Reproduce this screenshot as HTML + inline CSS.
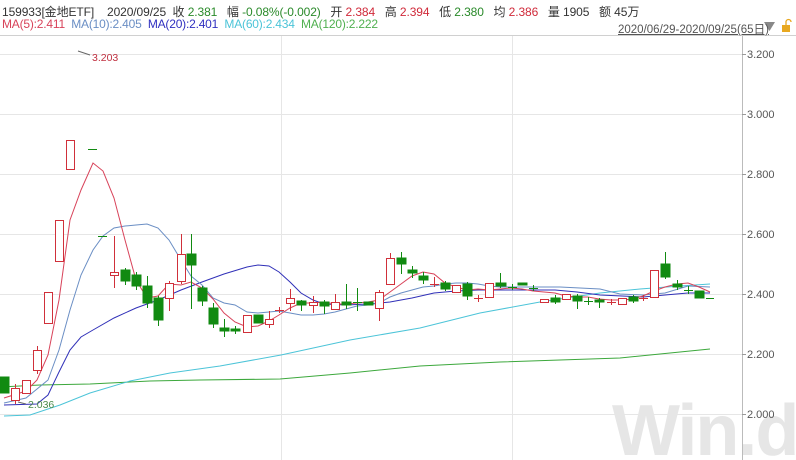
<!DOCTYPE html>
<html><head><meta charset="utf-8"><style>
html,body{margin:0;padding:0;background:#fff;width:796px;height:460px;overflow:hidden}
body{font-family:"Liberation Sans","Noto Sans CJK SC",sans-serif;position:relative}
.h1{position:absolute;left:2px;top:3px;font-size:12px;color:#333;white-space:nowrap;letter-spacing:-0.1px}
.h2{position:absolute;left:2px;top:17px;font-size:12px;white-space:nowrap;letter-spacing:-0.2px}
.g{color:#2a8a2a}.r{color:#d02a3a}
.dt{position:absolute;left:618px;top:21px;font-size:11.5px;color:#555;text-decoration:underline;white-space:nowrap}
svg{position:absolute;left:0;top:0}
</style></head><body>
<svg width="796" height="460" xmlns="http://www.w3.org/2000/svg">
<text x="612" y="455" font-family="Liberation Sans" font-weight="bold" font-size="72" fill="#e6e6e6" letter-spacing="-2">Win.d</text>
<line x1="0" y1="35.5" x2="796" y2="35.5" stroke="#d0d0d0"/>
<g stroke="#e6e6e6" stroke-width="1">
<line x1="0" y1="54.5" x2="742" y2="54.5"/><line x1="0" y1="114.5" x2="742" y2="114.5"/>
<line x1="0" y1="174.5" x2="742" y2="174.5"/><line x1="0" y1="234.5" x2="742" y2="234.5"/>
<line x1="0" y1="294.5" x2="742" y2="294.5"/><line x1="0" y1="354.5" x2="742" y2="354.5"/>
<line x1="0" y1="414.5" x2="742" y2="414.5"/>
<line x1="281.5" y1="36" x2="281.5" y2="460"/><line x1="512.5" y1="36" x2="512.5" y2="460"/>
</g>
<line x1="742.5" y1="36" x2="742.5" y2="460" stroke="#bbb"/>
<g stroke="#999"><line x1="742" y1="54.5" x2="746" y2="54.5"/><line x1="742" y1="114.5" x2="746" y2="114.5"/><line x1="742" y1="174.5" x2="746" y2="174.5"/><line x1="742" y1="234.5" x2="746" y2="234.5"/><line x1="742" y1="294.5" x2="746" y2="294.5"/><line x1="742" y1="354.5" x2="746" y2="354.5"/><line x1="742" y1="414.5" x2="746" y2="414.5"/></g>
<g font-size="11" fill="#555" font-family="Liberation Sans">
<text x="747" y="58">3.200</text><text x="747" y="118">3.000</text><text x="747" y="178">2.800</text><text x="747" y="238">2.600</text><text x="747" y="298">2.400</text><text x="747" y="358">2.200</text><text x="747" y="418">2.000</text>
</g>
<!-- MA lines -->
<g fill="none" stroke-width="1">
<polyline stroke="#3ca83c" points="0,387 40,385 90,384 150,381 200,380 280,379 350,373 420,366 500,362 560,360 620,358 680,352 710,349"/>
<polyline stroke="#4cc4d8" points="4,416 30,415 60,405 90,393 130,381 170,373 220,366 281,355 350,340 420,328 480,313 540,302 600,293 640,289 680,286 710,284"/>
<polyline stroke="#3030b8" points="4,405 37,404 48,395 59,372 70,350 81,337 93,330 114,318 136,308 158,300 181,290 202,282 224,274 247,267 258,265 269,266 279,272 290,282 301,293 313,300 324,304 346,305 368,304 390,302 412,298 434,293 456,291 478,290 511,290 555,290 577,292 600,295 622,296 643,297 665,295 688,293 710,293"/>
<polyline stroke="#6a8ec4" points="4,403 26,398 48,380 59,350 70,310 81,275 93,250 103,236 114,228 125,226 136,225 147,224 158,228 169,240 181,260 191,276 202,285 213,298 224,303 235,305 247,312 258,313 269,312 279,311 290,313 301,315 313,315 324,314 335,312 346,309 357,306 368,305 379,303 390,297 401,293 412,290 423,287 434,286 445,284 456,283 467,283 478,284 489,286 500,287 560,287 600,289 620,294 643,295 665,293 688,286 710,287"/>
<polyline stroke="#d8435a" points="4,398 26,391 37,380 48,355 59,300 70,220 81,190 93,163 103,171 114,198 125,240 136,280 147,298 158,296 169,284 181,285 191,282 202,288 213,299 224,313 235,322 247,327 258,326 269,321 279,315 290,308 301,303 313,303 324,302 335,304 346,304 357,303 368,302 379,300 390,292 401,284 412,276 423,272 434,274 445,283 456,287 467,290 478,289 489,290 500,289 511,288 522,289 533,291 544,292 555,293 566,296 577,297 588,297 599,299 611,300 622,300 633,299 643,296 654,291 665,287 677,284 688,283 699,287 710,292"/>
</g>
<!-- candles -->
<g id="c" stroke-width="1">
<!-- red hollow: stroke #d0303a fill white; green: fill #118a11 -->
<g stroke="#118a11" fill="#118a11">
<rect x="0" y="377" width="9" height="16"/>
<line x1="88" y1="149.5" x2="97" y2="149.5"/>
<line x1="98" y1="236.5" x2="107" y2="236.5"/>
<line x1="125.5" y1="268" x2="125.5" y2="285"/><rect x="121" y="270" width="9" height="11"/>
<line x1="136.5" y1="272" x2="136.5" y2="290"/><rect x="132" y="275" width="9" height="11"/>
<line x1="147.5" y1="276" x2="147.5" y2="308"/><rect x="143" y="286" width="9" height="17"/>
<line x1="158.5" y1="296" x2="158.5" y2="326"/><rect x="154" y="298" width="9" height="22"/>
<line x1="191.5" y1="234" x2="191.5" y2="309"/><rect x="187" y="254" width="9" height="11"/>
<line x1="202.5" y1="286" x2="202.5" y2="306"/><rect x="198" y="288" width="9" height="13"/>
<line x1="213.5" y1="303" x2="213.5" y2="328"/><rect x="209" y="308" width="9" height="16"/>
<line x1="224.5" y1="319" x2="224.5" y2="337"/><rect x="220" y="328" width="9" height="3"/>
<line x1="235.5" y1="326" x2="235.5" y2="334"/><rect x="231" y="329" width="9" height="2"/>
<rect x="254" y="315" width="9" height="8"/>
<line x1="301.5" y1="300" x2="301.5" y2="311"/><rect x="297" y="301" width="9" height="4"/>
<line x1="324.5" y1="300" x2="324.5" y2="314"/><rect x="320" y="302" width="9" height="4"/>
<line x1="346.5" y1="284" x2="346.5" y2="309"/><rect x="342" y="302" width="9" height="3"/>
<line x1="357.5" y1="288" x2="357.5" y2="311"/><line x1="353" y1="302.5" x2="362" y2="302.5"/>
<rect x="364" y="302" width="9" height="3"/>
<line x1="401.5" y1="252" x2="401.5" y2="274"/><rect x="397" y="258" width="9" height="6"/>
<line x1="412.5" y1="266" x2="412.5" y2="278"/><rect x="408" y="270" width="9" height="3"/>
<line x1="423.5" y1="272" x2="423.5" y2="284"/><rect x="419" y="276" width="9" height="4"/>
<line x1="445.5" y1="281" x2="445.5" y2="291"/><rect x="441" y="283" width="9" height="6"/>
<line x1="467.5" y1="282" x2="467.5" y2="300"/><rect x="463" y="284" width="9" height="12"/>
<line x1="500.5" y1="273" x2="500.5" y2="288"/><rect x="496" y="283" width="9" height="3"/>
<rect x="498" y="283" width="8" height="3"/>
<line x1="512.5" y1="284" x2="512.5" y2="290"/><line x1="508" y1="287.5" x2="517" y2="287.5"/>
<rect x="518" y="283" width="9" height="2"/>
<line x1="533.5" y1="285" x2="533.5" y2="291"/><line x1="529" y1="288.5" x2="538" y2="288.5"/>
<line x1="555.5" y1="295" x2="555.5" y2="304"/><rect x="551" y="298" width="9" height="4"/>
<line x1="577.5" y1="294" x2="577.5" y2="309"/><rect x="573" y="296" width="9" height="5"/>
<line x1="588.5" y1="297" x2="588.5" y2="305"/><line x1="584" y1="301.5" x2="593" y2="301.5"/>
<line x1="599.5" y1="298" x2="599.5" y2="308"/><rect x="595" y="300" width="9" height="2"/>
<line x1="633.5" y1="295" x2="633.5" y2="303"/><rect x="629" y="297" width="9" height="4"/>
<line x1="665.5" y1="252" x2="665.5" y2="279"/><rect x="661" y="264" width="9" height="13"/>
<line x1="677.5" y1="280" x2="677.5" y2="290"/><rect x="673" y="284" width="9" height="3"/>
<line x1="688.5" y1="286" x2="688.5" y2="294"/><line x1="684" y1="290.5" x2="693" y2="290.5"/>
<rect x="695" y="291" width="9" height="7"/>
<line x1="706" y1="298.5" x2="714" y2="298.5"/>
</g>
<g stroke="#d0303a" fill="#fff">
<line x1="15.5" y1="384" x2="15.5" y2="404"/><rect x="11.5" y="388.5" width="8" height="12"/>
<rect x="22.5" y="380.5" width="8" height="13"/>
<line x1="37.5" y1="346" x2="37.5" y2="374"/><rect x="33.5" y="350.5" width="8" height="20"/>
<rect x="44.5" y="292.5" width="8" height="31"/>
<rect x="55.5" y="220.5" width="8" height="41"/>
<rect x="66.5" y="140.5" width="8" height="29"/>
<line x1="114.5" y1="236" x2="114.5" y2="288"/><rect x="110.5" y="272.5" width="8" height="3"/>
<line x1="169.5" y1="281" x2="169.5" y2="311"/><rect x="165.5" y="283.5" width="8" height="15"/>
<line x1="181.5" y1="234" x2="181.5" y2="284"/><rect x="177.5" y="254.5" width="8" height="27"/>
<rect x="243.5" y="315.5" width="8" height="17"/>
<line x1="269.5" y1="311" x2="269.5" y2="328"/><rect x="265.5" y="319.5" width="8" height="5"/>
<line x1="279.5" y1="307" x2="279.5" y2="313"/><line x1="275" y1="310.5" x2="284" y2="310.5"/>
<line x1="290.5" y1="289" x2="290.5" y2="311"/><rect x="286.5" y="298.5" width="8" height="5"/>
<line x1="313.5" y1="296" x2="313.5" y2="313"/><rect x="309.5" y="302.5" width="8" height="3"/>
<line x1="335.5" y1="294" x2="335.5" y2="309"/><rect x="331.5" y="302.5" width="8" height="7"/>
<line x1="379.5" y1="290" x2="379.5" y2="321"/><rect x="375.5" y="292.5" width="8" height="16"/>
<line x1="390.5" y1="253" x2="390.5" y2="284"/><rect x="386.5" y="258.5" width="8" height="26"/>
<line x1="434.5" y1="277" x2="434.5" y2="287"/><line x1="430" y1="284.5" x2="439" y2="284.5"/>
<rect x="452.5" y="285.5" width="8" height="7"/>
<line x1="478.5" y1="295" x2="478.5" y2="302"/><line x1="474" y1="298.5" x2="483" y2="298.5"/>
<rect x="485.5" y="283.5" width="8" height="14"/>
<rect x="540.5" y="299.5" width="8" height="3"/>
<rect x="562.5" y="294.5" width="8" height="5"/>
<line x1="611.5" y1="299" x2="611.5" y2="305"/><line x1="607" y1="302.5" x2="616" y2="302.5"/>
<rect x="618.5" y="298.5" width="8" height="6"/>
<line x1="643.5" y1="295" x2="643.5" y2="301"/><line x1="639" y1="298.5" x2="648" y2="298.5"/>
<rect x="650.5" y="270.5" width="8" height="27"/>
</g>
</g>
<line x1="78" y1="51" x2="90" y2="55" stroke="#666"/>
<text x="92" y="61" font-size="10.5" fill="#c03040" font-family="Liberation Sans">3.203</text>
<line x1="18" y1="402" x2="26" y2="404" stroke="#666"/>
<text x="28" y="408" font-size="10.5" fill="#4a8a4a" font-family="Liberation Sans">2.036</text>
<polygon points="764,22 775,22 769.5,31" fill="#888"/>
<rect x="782" y="25" width="8" height="7" fill="#e8a820"/>
<path d="M786,25 v-3 a2.5,2.5 0 0 1 5,0" fill="none" stroke="#e8a820" stroke-width="1.3"/>
</svg>
<div class="h1">159933[金地ETF] &nbsp;&nbsp;&nbsp;2020/09/25 &nbsp;收 <span class="g">2.381</span> &nbsp;&nbsp;幅 <span class="g">-0.08%(-0.002)</span> &nbsp;&nbsp;开 <span class="r">2.384</span> &nbsp;&nbsp;高 <span class="r">2.394</span> &nbsp;&nbsp;低 <span class="g">2.380</span> &nbsp;&nbsp;均 <span class="r">2.386</span> &nbsp;&nbsp;量 1905 &nbsp;&nbsp;额 45万</div>
<div class="h2"><span style="color:#d8435a">MA(5):2.411</span> &nbsp;<span style="color:#6a8ec4">MA(10):2.405</span> &nbsp;<span style="color:#3030c0">MA(20):2.401</span> &nbsp;<span style="color:#4cc4d8">MA(60):2.434</span> &nbsp;<span style="color:#50b050">MA(120):2.222</span></div>
<div class="dt">2020/06/29-2020/09/25(65日)</div>
</body></html>
